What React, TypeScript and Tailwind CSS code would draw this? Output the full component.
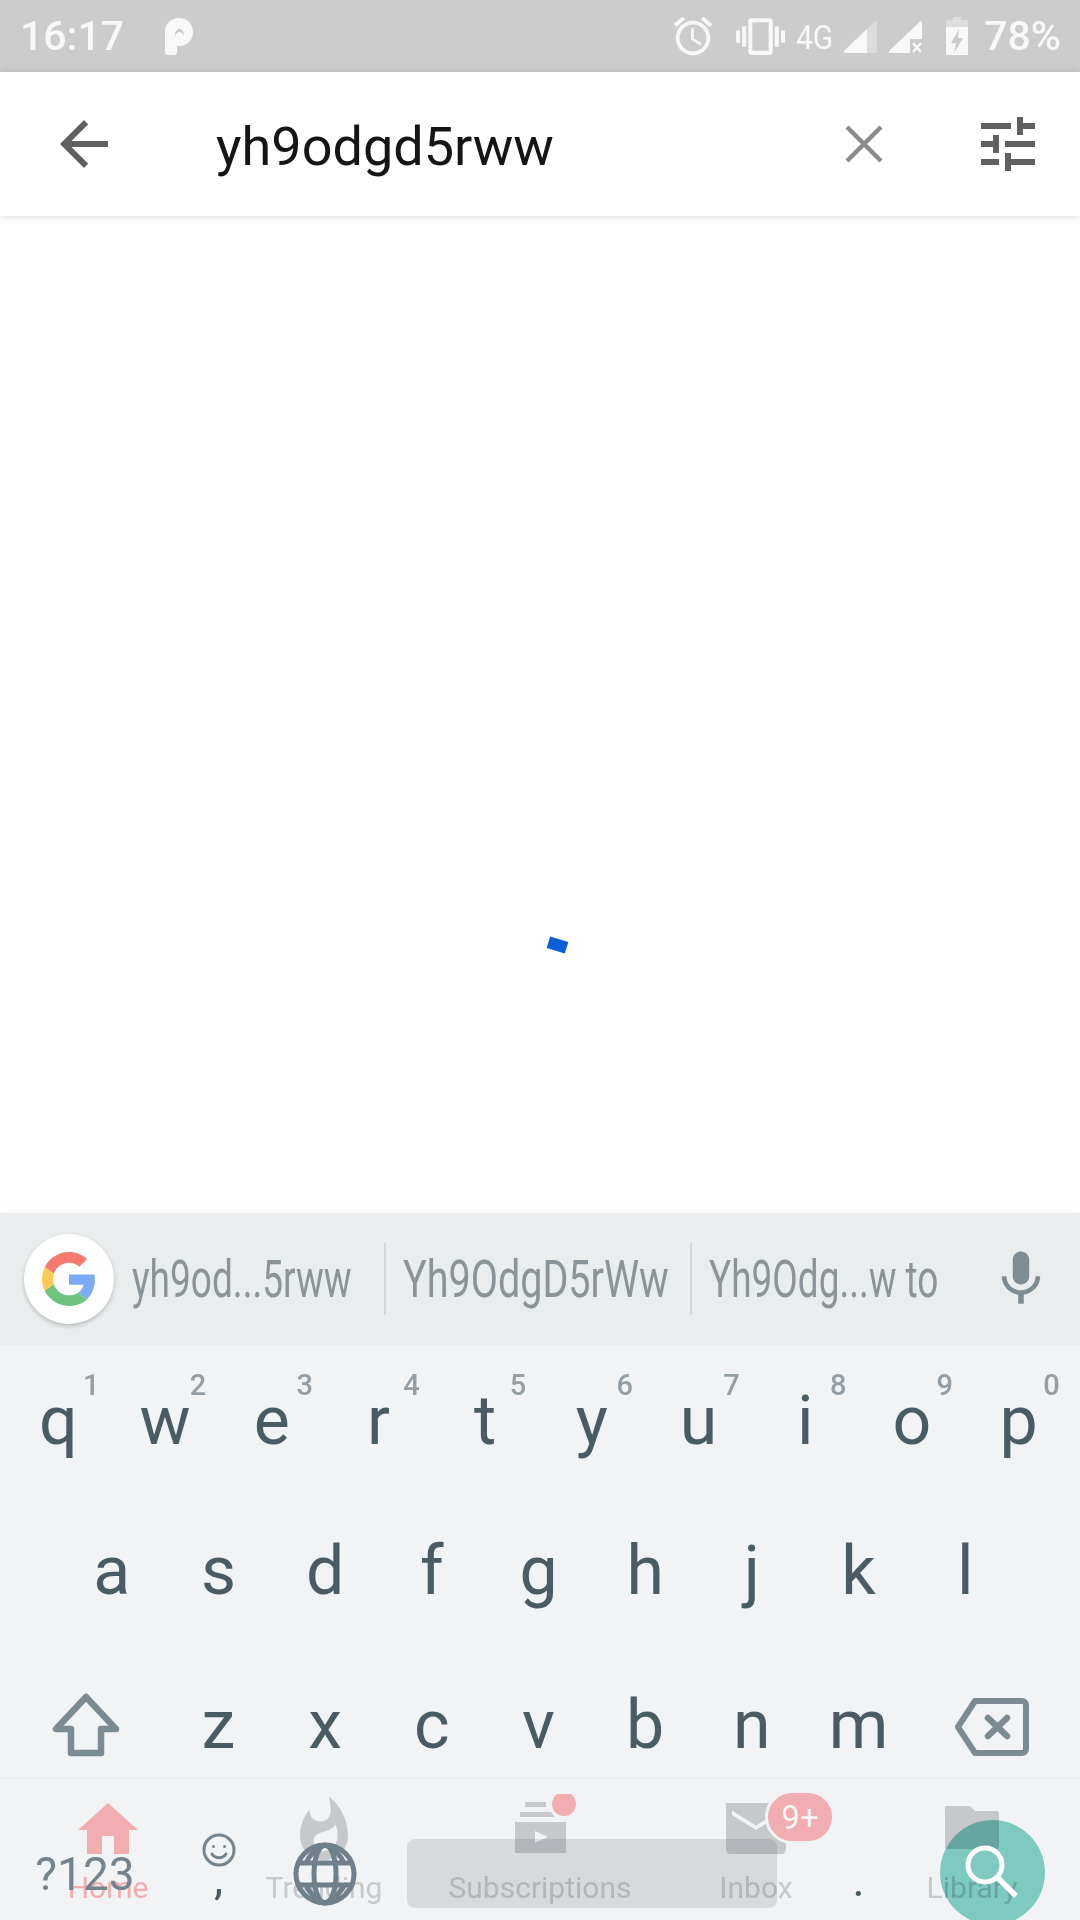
import { Fragment } from "react";

const ROW_ONE = [
  ["q", "1"],
  ["w", "2"],
  ["e", "3"],
  ["r", "4"],
  ["t", "5"],
  ["y", "6"],
  ["u", "7"],
  ["i", "8"],
  ["o", "9"],
  ["p", "0"],
];
const ROW_TWO = ["a", "s", "d", "f", "g", "h", "j", "k", "l"];
const ROW_THREE = ["z", "x", "c", "v", "b", "n", "m"];

const SUGGESTIONS = [
  { text: "yh9od...5rww", className: "w-[270px] pl-[18px]", scale: "scale-x-[0.727]" },
  { text: "Yh9OdgD5rWw", className: "w-[304px] pl-[17px]", scale: "scale-x-[0.775]" },
  { text: "Yh9Odg...w to", className: "w-[296px] pl-[17px]", scale: "scale-x-[0.725]" },
];

function StatusBar() {
  return (
    <div className="flex h-[72px] shrink-0 items-center bg-[#cccccc] pl-[20px] pr-[19px] text-[41px] font-medium leading-none text-[#f8f8f8]">
      <span>16:17</span>
      <svg className="ml-[41px] mb-[-1px]" width="28" height="37" viewBox="0 0 28 37">
        <path
          fill="#f8f8f8"
          d="M14 0C6 0 0 6 0 14v20a3 3 0 0 0 3 3h6a3 3 0 0 0 3-3v-6h2c8 0 14-6 14-14S22 0 14 0z"
        />
        <path fill="#cccccc" d="M10 18c0-5 2-7 4.500-7s4.500 2 4.500 7c-1.500-3-3-4-4.500-4s-3 1-4.500 4z" />
      </svg>
      <div className="ml-auto flex items-center">
        <svg width="46" height="46" viewBox="0 0 24 24" fill="#f8f8f8">
          <path d="M22 5.720l-4.600-3.860-1.290 1.530 4.600 3.860L22 5.720zM7.880 3.390L6.600 1.860 2 5.710l1.290 1.530 4.590-3.850zM12.500 8H11v6l4.750 2.850.75-1.230-4-2.370V8zM12 4c-4.970 0-9 4.030-9 9s4.030 9 9 9 9-4.030 9-9-4.030-9-9-9zm0 16c-3.870 0-7-3.130-7-7s3.130-7 7-7 7 3.130 7 7-3.130 7-7 7z" />
        </svg>
        <svg className="ml-[20px]" width="49" height="49" viewBox="0 0 24 24" fill="#f8f8f8">
          <path d="M0 15h2V9H0v6zm3 2h2V7H3v10zm19-8v6h2V9h-2zm-3 8h2V7h-2v10zM16.500 3h-9C6.670 3 6 3.670 6 4.500v15c0 .830.670 1.500 1.500 1.500h9c.830 0 1.500-.670 1.500-1.500v-15c0-.830-.670-1.500-1.500-1.500zM16 19H8V5h8v14z" />
        </svg>
        <span className="ml-[11px] w-[37px] origin-left scale-x-[0.88] text-[34px] font-normal mb-[-1px]">4G</span>
        <svg className="ml-[10px]" width="34" height="33" viewBox="0 0 34 33">
          <path fill="#f8f8f8" fillOpacity="0.35" d="M24 9L32 1.500Q34 0 34 3V31Q34 33 32 33H24z" />
          <path fill="#f8f8f8" d="M24 9V33H2Q0 33 1 31z" />
        </svg>
        <svg className="ml-[11px]" width="34" height="33" viewBox="0 0 34 33">
          <path fill="#f8f8f8" d="M32 1.500Q34 0 34 3V19H22V33H2Q0 33 1 31z" />
          <path stroke="#f8f8f8" strokeWidth="2.500" d="M25 23l8 9M33 23l-8 9" />
        </svg>
        <svg className="ml-[24px]" width="22" height="38" viewBox="0 0 22 38">
          <path fill="#f8f8f8" fillOpacity="0.4" d="M7 0h8v3h6a1 1 0 0 1 1 1v6H0V4a1 1 0 0 1 1-1h6z" />
          <path
            fill="#f8f8f8"
            fillRule="evenodd"
            d="M0 10h22v27a1 1 0 0 1-1 1H1a1 1 0 0 1-1-1zM13 12l-8 14h5l-2 10 9-15h-5z"
          />
        </svg>
        <span className="ml-[16px]">78%</span>
      </div>
    </div>
  );
}

function SearchBar() {
  return (
    <div className="relative z-10 flex h-[144px] shrink-0 items-center bg-white shadow-[0_1px_8px_rgba(0,0,0,0.16)]">
      <svg className="ml-[48px]" width="72" height="72" viewBox="0 0 24 24" fill="#606060">
        <path d="M20 11H7.830l5.590-5.590L12 4l-8 8 8 8 1.410-1.410L7.830 13H20v-2z" />
      </svg>
      <span className="ml-[96px] mt-[5px] text-[54px] leading-none text-[#151515]">yh9odgd5rww</span>
      <svg className="ml-auto mr-[1px]" width="38" height="38" viewBox="0 0 38 38" stroke="#8a8a8a" strokeWidth="4.500">
        <path d="M2 2l34 34M36 2L2 36" />
      </svg>
      <svg className="ml-[88px] mr-[36px]" width="72" height="72" viewBox="0 0 24 24" fill="#606060">
        <path d="M3 17v2h6v-2H3zM3 5v2h10V5H3zm10 16v-2h8v-2h-8v-2h-2v6h2zM7 9v2H3v2h4v2h2V9H7zm14 4v-2H11v2h10zm-6-4h2V7h4V5h-4V3h-2v6z" />
      </svg>
    </div>
  );
}

function GoogleButton() {
  return (
    <div className="ml-[24px] flex h-[90px] w-[90px] shrink-0 items-center justify-center rounded-full bg-white shadow-[0_2px_4px_rgba(0,0,0,0.22)]">
      <svg width="54" height="54" viewBox="0 0 48 48">
        <path fill="#f47a6f" d="M24 9.500c3.540 0 6.710 1.220 9.210 3.600l6.850-6.850C35.900 2.380 30.470 0 24 0 14.620 0 6.510 5.380 2.560 13.220l7.980 6.190C12.430 13.720 17.740 9.500 24 9.500z" />
        <path fill="#7baaf7" d="M46.980 24.550c0-1.570-.150-3.090-.380-4.550H24v9.020h12.940c-.580 2.960-2.260 5.480-4.780 7.180l7.730 6c4.510-4.180 7.090-10.360 7.090-17.650z" />
        <path fill="#fdca57" d="M10.530 28.590c-.480-1.450-.760-2.990-.760-4.590s.270-3.140.760-4.590l-7.980-6.190C.920 16.460 0 20.120 0 24c0 3.880.920 7.540 2.560 10.780l7.970-6.190z" />
        <path fill="#6cc480" d="M24 48c6.480 0 11.930-2.130 15.890-5.810l-7.730-6c-2.150 1.450-4.920 2.300-8.160 2.300-6.260 0-11.570-4.220-13.470-9.910l-7.980 6.190C6.510 42.620 14.620 48 24 48z" />
      </svg>
    </div>
  );
}

function SuggestionStrip() {
  return (
    <div className="flex h-[132px] items-center bg-[#e9edee]">
      <GoogleButton />
      {SUGGESTIONS.map((s, i) => (
        <Fragment key={s.text}>
          {i > 0 && <div className="h-[72px] w-[2px] shrink-0 bg-[#d2d6d8]" />}
          <div className={`${s.className} shrink-0 whitespace-nowrap`}>
            <span className={`inline-block origin-left text-[51px] leading-none text-[#8b9499] ${s.scale}`}>
              {s.text}
            </span>
          </div>
        </Fragment>
      ))}
      <svg className="mt-[-1px]" width="66" height="66" viewBox="0 0 24 24" fill="#7f8c92">
        <path d="M12 14c1.660 0 2.990-1.340 2.990-3L15 5c0-1.660-1.340-3-3-3S9 3.340 9 5v6c0 1.660 1.340 3 3 3zm5.300-3c0 3-2.540 5.100-5.300 5.100S6.700 14 6.700 11H5c0 3.410 2.720 6.230 6 6.720V21h2v-3.280c3.280-.480 6-3.300 6-6.720h-1.700z" />
      </svg>
    </div>
  );
}

function Key({ label, hint }: { label: string; hint?: string }) {
  return (
    <div className="relative flex h-full w-[106.7px] shrink-0 items-center justify-center text-[68px] leading-none text-[#4a5b63]">
      {label}
      {hint && (
        <span className="absolute left-[78px] top-[26px] text-[29px] font-medium leading-none text-[#949ea4]">
          {hint}
        </span>
      )}
    </div>
  );
}

function BottomNav() {
  return (
    <div className="absolute inset-x-0 bottom-0 grid h-[143px] grid-cols-5 border-t-2 border-[#ebedef] text-center text-[30px] leading-none text-[#c6c8ca]">
      <div className="flex flex-col items-center pt-[15px] text-[#f2adb0]">
        <svg width="72" height="72" viewBox="0 0 24 24" fill="#f2adb0">
          <path d="M10 20v-6h4v6h5v-8h3L12 3 2 12h3v8z" />
        </svg>
        <span className="mt-[7px]">Home</span>
      </div>
      <div className="flex flex-col items-center pt-[15px]">
        <svg width="72" height="72" viewBox="0 0 24 24" fill="#c6c8ca">
          <path d="M13.500.670s.740 2.650.740 4.800c0 2.060-1.350 3.730-3.410 3.730-2.070 0-3.630-1.670-3.630-3.730l.030-.360C5.210 7.510 4 10.620 4 14c0 4.420 3.580 8 8 8s8-3.580 8-8C20 8.610 17.410 3.800 13.500.670zM11.710 19c-1.780 0-3.220-1.400-3.220-3.140 0-1.620 1.050-2.760 2.810-3.120 1.770-.360 3.600-1.210 4.620-2.580.390 1.290.590 2.650.590 4.040 0 2.650-2.150 4.800-4.800 4.800z" />
        </svg>
        <span className="mt-[7px]">Trending</span>
      </div>
      <div className="flex flex-col items-center pt-[15px]">
        <svg width="72" height="72" viewBox="0 0 72 72">
          <path fill="#c6c8ca" d="M21 8h21v5H21zM16 18h31l4 5H16zM11 28h51v31H11z" />
          <path fill="#f1f3f5" d="M31 37l13 6-13 6z" />
          <circle cx="60" cy="10" r="15" fill="#f1f3f5" />
          <circle cx="60" cy="10" r="12" fill="#f2adb0" />
        </svg>
        <span className="mt-[7px]">Subscriptions</span>
      </div>
      <div className="relative flex flex-col items-center pt-[15px]">
        <svg width="72" height="72" viewBox="0 0 24 24" fill="#c6c8ca">
          <path d="M21.800 3H2.200C1.600 3 2 3 2 4v14c0 1 .300 2 1.500 2h17c1.200 0 1.500-1 1.500-2V4c0-1 .400-1-.200-1zM12 12L4 7V5.500l8 5 8-5V7z" />
        </svg>
        <span className="mt-[7px]">Inbox</span>
        <span className="absolute left-[117px] top-[11px] flex h-[54px] w-[70px] items-center justify-center rounded-full border-[3px] border-[#f1f3f5] bg-[#f2adb0] text-[33px] text-[#f7f7f7]">
          9+
        </span>
      </div>
      <div className="flex flex-col items-center pt-[15px]">
        <svg width="72" height="72" viewBox="0 0 72 72" fill="#c6c8ca">
          <path d="M13 12h20a3 3 0 0 1 2 1l4 4h20a3 3 0 0 1 4 3v32a3 3 0 0 1-3 3H13a3 3 0 0 1-4-3V16a3 3 0 0 1 4-4z" />
        </svg>
        <span className="mt-[7px]">Library</span>
      </div>
    </div>
  );
}

function KeyRows() {
  return (
    <div className="relative">
      <div className="flex h-[152px] justify-center pr-[3px]">
        {ROW_ONE.map(([k, h]) => (
          <Key key={k} label={k} hint={h} />
        ))}
      </div>
      <div className="flex h-[152px] justify-center pr-[3px] pb-[4px]">
        {ROW_TWO.map((k) => (
          <Key key={k} label={k} />
        ))}
      </div>
      <div className="flex h-[152px] items-center justify-center pr-[3px]">
        <div className="flex w-[160px] justify-center pl-[2px]">
          <svg width="68" height="64" viewBox="0 0 68 64" fill="none" stroke="#7c8a92" strokeWidth="6.500" strokeLinejoin="round">
            <path d="M34 4L4 36h15v24h30V36h15z" />
          </svg>
        </div>
        {ROW_THREE.map((k) => (
          <Key key={k} label={k} />
        ))}
        <div className="flex w-[160px] justify-center">
          <svg className="mt-[4px]" width="76" height="60" viewBox="0 0 76 60" fill="none" stroke="#7c8a92" strokeWidth="6" strokeLinejoin="round" strokeLinecap="round">
            <path d="M21 4H68a4 4 0 0 1 4 4V52a4 4 0 0 1-4 4H21L4 30z" />
            <path d="M34 21l19 18M53 21L34 39" strokeWidth="6.500" />
          </svg>
        </div>
      </div>
      <div className="flex h-[119px] items-center px-[5px] pt-[26px] text-[#4a5b63]">
        <div className="w-[160px] text-center text-[46px] leading-none text-[#75848c]">?123</div>
        <div className="mt-[-26px] flex w-[107px] flex-col items-center">
          <svg width="34" height="34" viewBox="0 0 34 34" fill="none" stroke="#75848c" strokeWidth="3">
            <circle cx="17" cy="17" r="15" />
            <circle cx="11.500" cy="13.500" r="1.500" fill="#75848c" stroke="none" />
            <circle cx="22.500" cy="13.500" r="1.500" fill="#75848c" stroke="none" />
            <path d="M10 21c3 5 11 5 14 0" strokeLinecap="round" />
          </svg>
          <span className="mt-[-12px] h-[34px] text-[46px] leading-none">,</span>
        </div>
        <div className="flex w-[107px] justify-center pr-[2px]">
          <svg width="64" height="64" viewBox="0 0 64 64" fill="none" stroke="#70808a" strokeWidth="5">
            <circle cx="32" cy="32" r="29" />
            <ellipse cx="32" cy="32" rx="11" ry="29" />
            <path d="M6 21h52M6 43h52M32 3Q18 9 13 21M32 3Q46 9 51 21M32 61Q18 55 13 43M32 61Q46 55 51 43" />
          </svg>
        </div>
        <div className="ml-[28px] h-[69px] w-[370px] rounded-[8px] bg-[#4a5a64]/[0.16]" />
        <div className="ml-[28px] w-[107px] pt-[12px] text-center text-[46px] leading-none">.</div>
      </div>
    </div>
  );
}

function Fab() {
  return (
    <div className="absolute bottom-[-5px] left-[940px] flex h-[105px] w-[105px] items-center justify-center rounded-full bg-[#85d4c7] mix-blend-multiply" />
  );
}

function FabGlass() {
  return (
    <svg className="absolute bottom-[17px] left-[960px]" width="64" height="64" viewBox="0 0 64 64" fill="none" stroke="#ffffff" strokeWidth="5">
      <circle cx="25" cy="26" r="17" />
      <path d="M38 39l18 18" strokeWidth="5.500" />
    </svg>
  );
}

export default function App() {
  return (
    <div className="flex h-[1920px] w-[1080px] flex-col overflow-hidden bg-white font-['Roboto',sans-serif]">
      <StatusBar />
      <SearchBar />
      <div className="flex-1 pl-[548px] pt-[723px]">
        <div className="h-[12px] w-[19px] rotate-[17deg] bg-[#0a5fd8]" />
      </div>
      <div className="shrink-0 shadow-[0_-3px_8px_rgba(0,0,0,0.03)]">
        <SuggestionStrip />
        <div className="relative h-[575px] overflow-hidden bg-[#f1f3f5]">
          <BottomNav />
          <Fab />
          <FabGlass />
          <KeyRows />
        </div>
      </div>
    </div>
  );
}
